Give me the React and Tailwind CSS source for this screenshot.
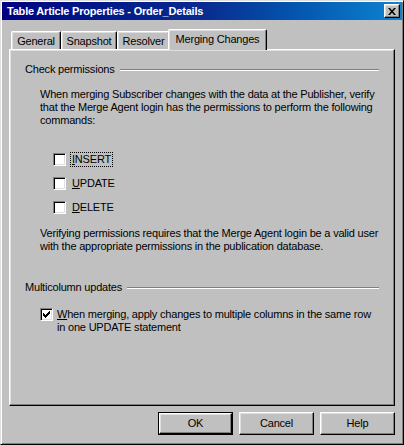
import React from 'react';

const raised = 'border border-t-white border-l-white border-r-black border-b-black shadow-[inset_-1px_-1px_#808080,inset_1px_1px_#dfdfdf]';
const sunken = 'border border-t-[#808080] border-l-[#808080] border-r-white border-b-white shadow-[inset_1px_1px_#000,inset_-1px_-1px_#dfdfdf]';

function CheckBox({ checked }) {
  return (
    <div className={`w-[13px] h-[13px] shrink-0 bg-white ${sunken} flex items-center justify-center`}>
      {checked && (
        <svg width="7" height="7" viewBox="0 0 7 7" shapeRendering="crispEdges">
          <path d="M6 0h1v3h-1zM5 1h1v3h-1zM4 2h1v3h-1zM3 3h1v3h-1zM2 4h1v3h-1zM1 3h1v3h-1zM0 2h1v3h-1z" fill="#000" />
        </svg>
      )}
    </div>
  );
}

function GroupHeader({ label }) {
  return (
    <div className="flex items-center gap-[5px] h-[13px]">
      <span className="leading-[13px] whitespace-nowrap">{label}</span>
      <div className="flex-1 h-[2px] border-t border-t-[#808080] border-b border-b-white" />
    </div>
  );
}

function Tab({ label, width }) {
  return (
    <div
      className="h-[18px] flex items-center justify-center border-t border-l border-r border-t-white border-l-white border-r-black rounded-t-[2px] shadow-[inset_-1px_0_#808080,inset_1px_1px_#dfdfdf]"
      style={{ width }}
    >
      <span className="leading-[13px] pt-[1px]">{label}</span>
    </div>
  );
}

function Button({ label, isDefault }) {
  return (
    <div className={`w-[75px] h-[23px] ${isDefault ? 'border border-black' : ''}`}>
      <div className={`w-full h-full ${raised} flex items-center justify-center`}>
        <span className="leading-[13px]">{label}</span>
      </div>
    </div>
  );
}

export default function App() {
  return (
    <div className="w-[404px] h-[445px] bg-[#c0c0c0] text-black text-[11px] tracking-[-0.2px] whitespace-nowrap font-['Liberation_Sans',Arial,sans-serif] border border-t-[#dfdfdf] border-l-[#dfdfdf] border-r-black border-b-black shadow-[inset_1px_1px_#fff,inset_-1px_-1px_#808080] p-[1px] flex flex-col">
      {/* title bar */}
      <div className="h-[18px] flex items-center pl-[5px] pr-[2px] bg-gradient-to-r from-[#000080] via-[#0a2a90] to-[#1084d0]">
        <span className="flex-1 text-white font-bold leading-[13px]">Table Article Properties - Order_Details</span>
        <div className={`w-[16px] h-[14px] bg-[#c0c0c0] ${raised} flex items-center justify-center`}>
          <svg width="8" height="7" viewBox="0 0 8 7">
            <polygon points="0,0 2,0 8,7 6,7" fill="#000" />
            <polygon points="6,0 8,0 2,7 0,7" fill="#000" />
          </svg>
        </div>
      </div>

      <div className="px-[7px] pt-[9px] flex flex-col">
        {/* tabs */}
        <div className="flex items-end pl-[2px] h-[20px]">
          <Tab label="General" width={50} />
          <Tab label="Snapshot" width={56} />
          <Tab label="Resolver" width={53} />
          <div className="relative z-10 -mx-[2px] -mb-px w-[99px] h-[21px] bg-[#c0c0c0] flex items-start justify-center pt-[3px] border-t border-l border-r border-t-white border-l-white border-r-black rounded-t-[2px] shadow-[inset_-1px_0_#808080,inset_1px_1px_#dfdfdf]">
            <span className="leading-[13px]">Merging Changes</span>
          </div>
        </div>

        {/* panel */}
        <div className={`h-[357px] ${raised} pt-[13px] pl-[15px] pr-[15px] flex flex-col`}>
          <GroupHeader label="Check permissions" />
          <div className="pl-[15px] mt-[12px] leading-[13px]">
            When merging Subscriber changes with the data at the Publisher, verify<br />
            that the Merge Agent login has the permissions to perform the following<br />
            commands:
          </div>

          <div className="pl-[28px] mt-[24px] flex flex-col gap-[7px]">
            <div className="flex items-center h-[17px] gap-[4px]">
              <CheckBox />
              <span className="leading-[13px] px-[1px] border border-dotted border-black"><span className="underline">I</span>NSERT</span>
            </div>
            <div className="flex items-center h-[17px] gap-[4px]">
              <CheckBox />
              <span className="leading-[13px] px-[2px]"><span className="underline">U</span>PDATE</span>
            </div>
            <div className="flex items-center h-[17px] gap-[4px]">
              <CheckBox />
              <span className="leading-[13px] px-[2px]"><span className="underline">D</span>ELETE</span>
            </div>
          </div>

          <div className="pl-[15px] mt-[11px] leading-[13px]">
            Verifying permissions requires that the Merge Agent login be a valid user<br />
            with the appropriate permissions in the publication database.
          </div>

          <div className="mt-[28px]">
            <GroupHeader label="Multicolumn updates" />
          </div>

          <div className="pl-[15px] mt-[14px] flex items-start gap-[4px]">
            <CheckBox checked />
            <div className="leading-[13px]">
              <span className="underline">W</span>hen merging, apply changes to multiple columns in the same row<br />
              in one UPDATE statement
            </div>
          </div>
        </div>

        {/* buttons */}
        <div className="mt-[6px] flex justify-end gap-[6px]">
          <Button label="OK" isDefault />
          <Button label="Cancel" />
          <Button label="Help" />
        </div>
      </div>
    </div>
  );
}
